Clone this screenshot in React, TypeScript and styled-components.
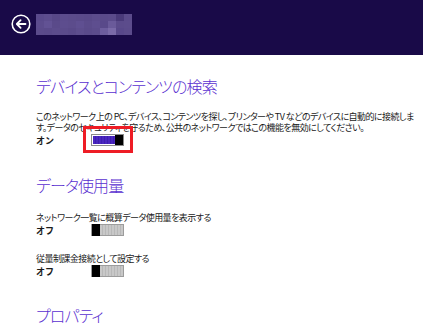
import React from "react";
import styled, { createGlobalStyle } from "styled-components";

const Global = createGlobalStyle`
  html, body { margin: 0; padding: 0; background: #fff; }
  body { font-family: "Noto Sans CJK JP", "Noto Sans", sans-serif; color: #1a1a1a; }
`;

const Page = styled.div`
  width: 423px;
  height: 334px;
  overflow: hidden;
  background: #fff;
`;

const Header = styled.header`
  height: 55px;
  background: #190a48;
  display: flex;
  align-items: center;
  padding: 0 0 7px 11px;
  gap: 6px;
  box-sizing: border-box;
`;

const BackButton = styled.div`
  width: 20px;
  height: 20px;
  display: flex;
  align-items: center;
  justify-content: center;
`;

const Mosaic = styled.div`
  display: grid;
  grid-template-columns: repeat(12, 8px);
  grid-template-rows: repeat(3, 7px);
  margin-left: -1px;
`;

const Cell = styled.div<{ $c: string }>`
  background: ${(p) => p.$c};
`;

const Content = styled.main`
  padding-left: 36px;
  padding-top: 21px;
`;

const Heading = styled.h2<{ $gap: number }>`
  margin: 0 0 ${(p) => p.$gap}px 0;
  font-weight: 300;
  font-size: 16px;
  line-height: 20px;
  color: #5a2fd0;
  font-feature-settings: "palt";
  letter-spacing: -0.9px;
`;

const Para = styled.p`
  margin: 0;
  font-size: 9px;
  line-height: 11px;
  white-space: nowrap;
  font-feature-settings: "palt";
  letter-spacing: -0.55px;
`;

const Row = styled.div<{ $mb: number }>`
  display: flex;
  align-items: center;
  height: 14px;
  margin-bottom: ${(p) => p.$mb}px;
`;

const State = styled.span`
  width: 55px;
  font-size: 9px;
  font-weight: 700;
`;

const ToggleWrap = styled.div`
  position: relative;
`;

const Highlight = styled.div`
  position: absolute;
  left: -8px;
  top: -8px;
  width: 44px;
  height: 21px;
  border: 3px solid #ee1c25;
`;

const Toggle = styled.div<{ $on: boolean }>`
  width: 33px;
  height: 12px;
  box-sizing: border-box;
  border: 1px solid ${(p) => (p.$on ? "#8a8a8a" : "#9c9c9c")};
  display: flex;
  flex-direction: ${(p) => (p.$on ? "row" : "row-reverse")};
  background: ${(p) => (p.$on ? "#fff" : "#c2c2c2")};
  padding: ${(p) => (p.$on ? "1px 0 1px 1px" : "0")};
`;

const Track = styled.div<{ $on: boolean }>`
  flex: 1;
  background: ${(p) =>
    p.$on
      ? "repeating-linear-gradient(90deg, #4a26c0 0 2px, #3d1fb0 2px 3px)"
      : "repeating-linear-gradient(90deg, #c8c8c8 0 2px, #b8b8b8 2px 3px)"};
`;

const Thumb = styled.div`
  width: 8px;
  background: #000;
  margin: -1px 0;
`;

const Spacer = styled.div<{ $h: number }>`
  height: ${(p) => p.$h}px;
`;

const mosaicColors = [
  "#5a4a8c","#5d4d8e","#584888","#5c4c8d","#5b4b8b","#5a4a8a","#594989","#5c4c8c","#5a4a8a","#5b4b8b","#4a3a7a","#5b4b8b",
  "#5c4c8d","#625294","#5a4a8a","#5d4d8e","#5c4c8c","#5f4f91","#5b4b8b","#5e4e8f","#59498a","#6a5a9a","#5b4b8b","#5c4c8c",
  "#5b4b8b","#5a4a8a","#5c4c8c","#5b4b8b","#594989","#5d4d8d","#5a4a8a","#5c4c8c","#6d5d9e","#7a6aa8","#58488a","#5b4b8b",
];

function Switch({ on }: { on: boolean }) {
  return (
    <Toggle $on={on}>
      <Track $on={on} />
      <Thumb />
    </Toggle>
  );
}

export default function App() {
  return (
    <Page>
      <Global />
      <Header>
        <BackButton>
          <svg width="20" height="20" viewBox="0 0 20 20">
            <circle cx="10" cy="10" r="8.8" fill="none" stroke="#fff" strokeWidth="1.6" />
            <path d="M14.5 10H6M9.6 6.2L5.8 10l3.8 3.8" fill="none" stroke="#fff" strokeWidth="1.8" strokeLinecap="round" strokeLinejoin="round" />
          </svg>
        </BackButton>
        <Mosaic>
          {mosaicColors.map((c, i) => (
            <Cell key={i} $c={c} />
          ))}
        </Mosaic>
      </Header>
      <Content>
        <Heading $gap={15}>デバイスとコンテンツの検索</Heading>
        <Para>
          このネットワーク上の PC、デバイス、コンテンツを探し、プリンターや TV などのデバイスに自動的に接続しま
          <br />
          す。データのセキュリティを守るため、公共のネットワークではこの機能を無効にしてください。
        </Para>
        <Row $mb={28}>
          <State>オン</State>
          <ToggleWrap>
            <Highlight />
            <Switch on />
          </ToggleWrap>
        </Row>
        <Heading $gap={17}>データ使用量</Heading>
        <Para>ネットワーク一覧に概算データ使用量を表示する</Para>
        <Row $mb={0}>
          <State>オフ</State>
          <Switch on={false} />
        </Row>
        <Spacer $h={16} />
        <Para>従量制課金接続として設定する</Para>
        <Row $mb={27}>
          <State>オフ</State>
          <Switch on={false} />
        </Row>
        <Heading $gap={0}>プロパティ</Heading>
      </Content>
    </Page>
  );
}
